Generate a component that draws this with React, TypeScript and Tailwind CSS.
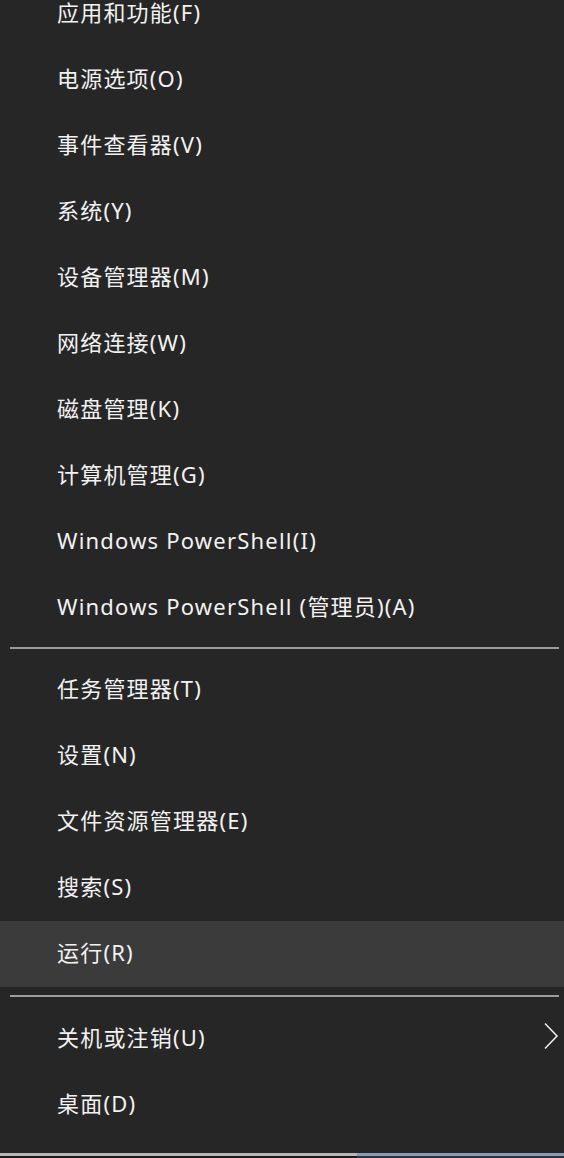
import React from "react";

const group1 = [
  "应用和功能(F)",
  "电源选项(O)",
  "事件查看器(V)",
  "系统(Y)",
  "设备管理器(M)",
  "网络连接(W)",
  "磁盘管理(K)",
  "计算机管理(G)",
  "Windows PowerShell(I)",
  "Windows PowerShell (管理员)(A)",
];
const group2 = ["任务管理器(T)", "设置(N)", "文件资源管理器(E)", "搜索(S)", "运行(R)"];

function Row({ label, active, chevron }: { label: string; active?: boolean; chevron?: boolean }) {
  return (
    <div
      className={
        "h-[66px] flex items-center pl-[57px] pr-[5px] pb-[4px] shrink-0 " + (active ? "bg-[#3b3b3b]" : "")
      }
    >
      <span className="flex-1 text-[22px] leading-none tracking-[1.2px] text-[#f2f2f2] whitespace-nowrap">
        {label}
      </span>
      {chevron && (
        <svg width="16" height="28" viewBox="0 0 16 28" fill="none" className="mt-[-2px]">
          <polyline points="2,1.5 14,14 2,26.5" stroke="#f2f2f2" strokeWidth="1.5" strokeLinejoin="miter" />
        </svg>
      )}
    </div>
  );
}

export default function App() {
  return (
    <div
      className="w-[564px] h-[1158px] bg-[#262626] overflow-hidden flex flex-col"
      style={{ fontFamily: '"Noto Sans", "Noto Sans CJK SC", sans-serif' }}
    >
      <div className="flex flex-col mt-[-19px]">
        {group1.map((l) => (
          <Row key={l} label={l} />
        ))}
        <div className="pt-[6px] pb-[8px] pl-[10px] pr-[5px]">
          <div className="h-[2px] bg-[#9c9c9c]" />
        </div>
        {group2.map((l) => (
          <Row key={l} label={l} active={l === "运行(R)"} />
        ))}
        <div className="pt-[8px] pb-[9px] pl-[10px] pr-[5px]">
          <div className="h-[2px] bg-[#9c9c9c]" />
        </div>
        <Row label="关机或注销(U)" chevron />
        <Row label="桌面(D)" />
      </div>
      <div className="mt-auto flex h-[5px]">
        <div className="w-[357px] flex flex-col">
          <div className="h-[3px] bg-[#b8b8b8]" />
          <div className="flex-1 bg-[#1c1c1c]" />
        </div>
        <div className="flex-1 flex flex-col">
          <div className="h-[3px] bg-[#8d9bb0]" />
          <div className="flex-1 bg-[#2a3445]" />
        </div>
      </div>
    </div>
  );
}
